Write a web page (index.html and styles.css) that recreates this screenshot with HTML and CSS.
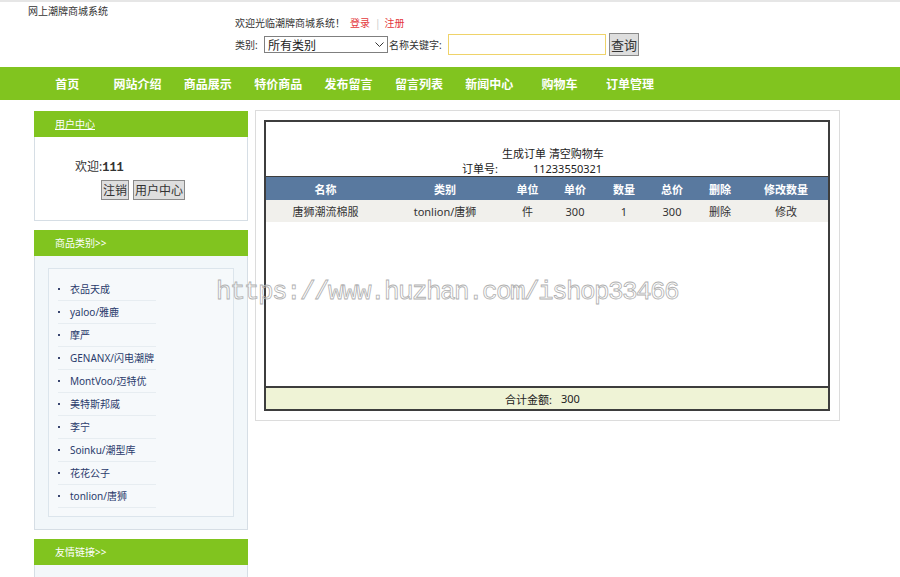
FILE: index.html
```html
<!DOCTYPE html>
<html lang="zh-CN">
<head>
<meta charset="utf-8">
<title>网上潮牌商城系统</title>
<link rel="stylesheet" href="styles.css">
</head>
<body>
<header class="top">
  <div class="site-name">网上潮牌商城系统</div>
  <div class="top-tools">
    <div class="welcome">欢迎光临潮牌商城系统！<a class="red login" href="#">登录</a><span class="sep">|</span><a class="red" href="#">注册</a></div>
    <form class="search">
      <span class="lbl-cat">类别:</span>
      <div class="select"><span>所有类别</span><svg width="9" height="5" viewBox="0 0 9 5"><polyline points="0.5,0.5 4.5,4.5 8.5,0.5" fill="none" stroke="#333" stroke-width="1"/></svg></div>
      <span class="lbl-key">名称关键字:</span>
      <div class="input"></div>
      <button type="button" class="btn btn-q">查询</button>
    </form>
  </div>
</header>
<nav class="nav">
  <a href="#">首页</a>
  <a href="#">网站介绍</a>
  <a href="#">商品展示</a>
  <a href="#">特价商品</a>
  <a href="#">发布留言</a>
  <a href="#">留言列表</a>
  <a href="#">新闻中心</a>
  <a href="#">购物车</a>
  <a href="#">订单管理</a>
</nav>
<div class="main">
  <aside class="side">
    <div class="box">
      <div class="box-head"><a href="#">用户中心</a></div>
      <div class="box-body user">
        <div class="hello">欢迎:<b class="uname">111</b></div>
        <div class="user-btns"><button type="button" class="btn">注销</button><button type="button" class="btn">用户中心</button></div>
      </div>
    </div>
    <div class="box">
      <div class="box-head">商品类别&gt;&gt;</div>
      <div class="box-body cats">
        <ul class="cat-list">
          <li>衣品天成</li>
          <li>yaloo/雅鹿</li>
          <li>摩严</li>
          <li>GENANX/闪电潮牌</li>
          <li>MontVoo/迈特优</li>
          <li>美特斯邦威</li>
          <li>李宁</li>
          <li>Soinku/潮型库</li>
          <li>花花公子</li>
          <li>tonlion/唐狮</li>
        </ul>
      </div>
    </div>
    <div class="box">
      <div class="box-head">友情链接&gt;&gt;</div>
      <div class="box-body links"></div>
    </div>
  </aside>
  <section class="content">
    <div class="cart">
      <div class="cart-top">
        <div class="actions"><a href="#">生成订单</a> <a href="#">清空购物车</a></div>
        <div class="order-no"><span>订单号:</span><span class="num">11233550321</span></div>
      </div>
      <div class="grid cart-head">
        <div>名称</div><div>类别</div><div>单位</div><div>单价</div><div>数量</div><div>总价</div><div>删除</div><div>修改数量</div>
      </div>
      <div class="grid cart-row">
        <div>唐狮潮流棉服</div><div>tonlion/唐狮</div><div>件</div><div>300</div><div>1</div><div>300</div><div>删除</div><div>修改</div>
      </div>
      <div class="cart-blank"></div>
      <div class="cart-foot"><span>合计金额:</span><span class="total">300</span></div>
    </div>
  </section>
</div>
<div class="watermark">https://www.huzhan.com/ishop33466</div>
</body>
</html>
```
FILE: styles.css
```css
* { box-sizing: border-box; }
html, body { margin: 0; padding: 0; }
body {
  width: 900px;
  height: 577px;
  overflow: hidden;
  position: relative;
  background: #fff;
  color: #333;
  font-family: "Noto Sans", "Noto Sans CJK SC", sans-serif;
}
a { color: inherit; text-decoration: none; }

/* top */
.top {
  height: 67px;
  border-top: 2px solid #e6e6e6;
  display: flex;
  padding-left: 28px;
  font-size: 10px;
}
.site-name { width: 207px; line-height: 14px; padding-top: 2px; }
.top-tools { padding-top: 14px; }
.welcome { display: flex; align-items: center; height: 14px; line-height: 14px; }
.red { color: #e4393c; }
.login { margin-left: 5px; }
.sep { color: #cccccc; margin: 0 4px 0 5px; }
.search { display: flex; align-items: center; height: 23px; margin: 3px 0 0; }
.lbl-cat { width: 29px; }
.select {
  width: 124px;
  height: 17px;
  border: 1px solid #7f7f7f;
  background: #fff;
  display: flex;
  align-items: center;
  justify-content: space-between;
  padding: 0 3px 0 3px;
  font-size: 12px;
  color: #222;
}
.lbl-key { margin-left: 1px; width: 59px; }
.input { width: 158px; height: 21px; border: 1px solid #efd36a; background: #fff; }
.btn {
  font-family: "Liberation Serif", "Noto Sans CJK SC", serif;
  background: #dedede;
  border: 1px solid #8a8a8a;
  color: #333;
  padding: 0;
  margin: 0;
}
.btn-q { margin-left: 3px; width: 30px; height: 23px; font-size: 13px; }

/* nav */
.nav {
  height: 33px;
  background: #81c41f;
  display: flex;
  padding-left: 32px;
}
.nav a {
  flex: 0 0 70.35px;
  text-align: center;
  line-height: 33px;
  color: #fff;
  font-weight: bold;
  font-size: 12px;
  font-family: "Noto Sans CJK SC", sans-serif;
}

/* main */
.main { display: flex; align-items: flex-start; padding: 10px 0 0 34px; }
.side { width: 214px; margin-top: 1px; }
.box + .box { margin-top: 9px; }
.box-head {
  height: 26px;
  line-height: 26px;
  background: #81c41f;
  color: #fff;
  font-size: 10px;
  padding-left: 21px;
}
.box-head a { text-decoration: underline; }
.box-body { border: 1px solid #d6dee5; border-top: none; }
.user { height: 84px; padding: 22px 0 0 40px; }
.hello { font-size: 12px; line-height: 16px; }
.uname { font-family: "Liberation Mono", monospace; font-size: 12px; }
.user-btns { margin: 4px 0 0 26px; display: flex; gap: 4px; }
.user-btns .btn { height: 20px; font-size: 12px; padding: 0 1px; }

.cats { background: #f2f7fa; padding: 12px 13px; }
.cat-list {
  list-style: none;
  margin: 0;
  padding: 9px 0 8px;
  border: 1px solid #dce5ec;
  background: #f6f9fb;
}
.cat-list li {
  margin-left: 9px;
  width: 98px;
  height: 23px;
  line-height: 22px;
  border-bottom: 1px solid #e7edf1;
  font-size: 10px;
  color: #2a3b6c;
  display: flex;
  align-items: center;
  white-space: nowrap;
}
.cat-list li::before {
  content: "";
  width: 2px;
  height: 2px;
  background: #3a4670;
  margin-right: 10px;
  flex: none;
}
.links { height: 40px; background: #f3f7fa; }

/* content */
.content {
  margin-left: 7px;
  width: 585px;
  border: 1px solid #dcdcdc;
  padding: 9px 9px 9px 8px;
  font-size: 11px;
  color: #222;
}
.cart { border: 2px solid #3d3d3d; }
.cart-top { height: 54px; padding-top: 24px; line-height: 15px; }
.actions { padding-left: 236px; }
.order-no { padding-left: 196px; display: flex; }
.order-no .num { margin-left: 35px; }
.grid {
  display: grid;
  grid-template-columns: 119px 120px 45px 50px 48px 48px 48px 84px;
  text-align: center;
  align-items: center;
}
.cart-head {
  height: 24px;
  border-top: 1px solid #3d3d3d;
  background: #59799f;
  color: #fff;
  font-weight: bold;
}
.cart-row { height: 22px; background: #f1f0ec; color: #333; }
.cart-blank { height: 164px; }
.cart-foot {
  height: 23px;
  border-top: 2px solid #3d3d3d;
  background: #eff3d6;
  display: flex;
  align-items: center;
  padding-left: 239px;
}
.total { margin-left: 9px; }

/* watermark overlay */
.watermark {
  position: absolute;
  left: 216px;
  top: 279px;
  font-family: "Liberation Mono", monospace;
  font-size: 26px;
  line-height: 26px;
  letter-spacing: -1.6px;
  color: transparent;
  -webkit-text-stroke: 0.8px #b0b0b0;
  white-space: nowrap;
  pointer-events: none;
}
```
